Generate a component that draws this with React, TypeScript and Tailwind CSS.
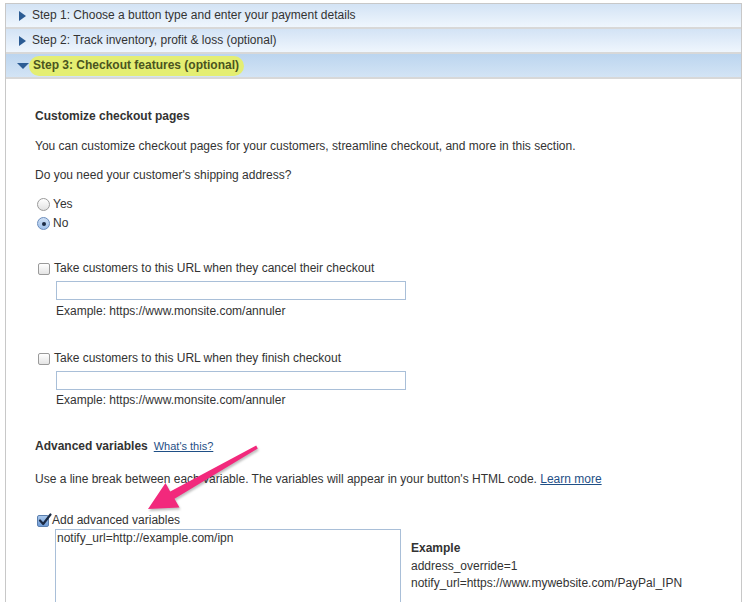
import React from 'react';

const font = "font-['Liberation_Sans',Arial,Helvetica,sans-serif]";

const StepRow: React.FC<{ label: string; open?: boolean }> = ({ label, open }) => (
  <div
    className={`h-[25px] flex items-center border-b-2 border-[#d8d8d8] ${
      open
        ? 'bg-gradient-to-b from-[#bcd5ef] to-[#d3e4f5]'
        : 'bg-gradient-to-b from-[#d3e3f5] to-[#eff6fd]'
    }`}
  >
    {open ? (
      <span className="ml-[11px] w-0 h-0 border-l-[6px] border-r-[6px] border-t-[6px] border-l-transparent border-r-transparent border-t-[#2c5c94]" />
    ) : (
      <span className="ml-[13px] w-0 h-0 border-t-[5px] border-b-[5px] border-l-[7px] border-t-transparent border-b-transparent border-l-[#2c5c94]" />
    )}
    {open ? (
      <span className="pl-[4px] pr-[5px] h-[20px] flex items-center rounded-full bg-[#e4ee72] text-[#4a5520] font-bold text-[12px]">
        {label}
      </span>
    ) : (
      <span className="ml-[6px] text-[#333] text-[12px]">{label}</span>
    )}
  </div>
);

const Checkbox: React.FC<{ checked?: boolean }> = ({ checked }) =>
  checked ? (
    <span className="relative w-[12px] h-[12px] rounded-[2px] border border-[#5b7fae] bg-gradient-to-b from-[#a9c8ec] to-[#6f9bd6] shrink-0">
      <svg viewBox="0 0 14 14" className="absolute -top-[3px] left-[0px] w-[14px] h-[14px]">
        <path d="M2 7.5 L5.2 11 L12.5 1.5" fill="none" stroke="#1b2a44" strokeWidth="2.2" strokeLinecap="round" strokeLinejoin="round" />
      </svg>
    </span>
  ) : (
    <span className="w-[12px] h-[12px] rounded-[2px] border border-[#9a9a9a] bg-gradient-to-b from-[#ffffff] to-[#e4e4e4] shrink-0" />
  );

const Radio: React.FC<{ checked?: boolean }> = ({ checked }) => (
  <span
    className={`w-[13px] h-[13px] rounded-full border flex items-center justify-center shrink-0 ${
      checked
        ? 'border-[#6a8cbc] bg-gradient-to-b from-[#cfe0f5] to-[#9fc0ea]'
        : 'border-[#9a9a9a] bg-gradient-to-b from-[#ffffff] to-[#e2e2e2]'
    }`}
  >
    {checked && <span className="w-[4px] h-[4px] rounded-full bg-[#1c2b44]" />}
  </span>
);

export default function App() {
  return (
    <div className={`${font} text-[12px] leading-[15px] text-[#333] bg-white w-[748px] h-[602px] overflow-hidden relative`}>
      <div className="ml-[5px] mt-[3px] w-[737px] border-l border-r border-t border-[#c8c8c8]">
        <StepRow label="Step 1: Choose a button type and enter your payment details" />
        <StepRow label="Step 2: Track inventory, profit & loss (optional)" />
        <StepRow label="Step 3: Checkout features (optional)" open />

        <div className="pl-[29px] pt-[30px] pb-[40px]">
          <div className="font-bold">Customize checkout pages</div>
          <div className="mt-[15px]">
            You can customize checkout pages for your customers, streamline checkout, and more in this section.
          </div>
          <div className="mt-[14px]">Do you need your customer's shipping address?</div>

          <div className="mt-[12px] flex flex-col">
            <label className="h-[19px] flex items-center gap-[3px] pl-[2px]">
              <Radio />
              <span>Yes</span>
            </label>
            <label className="h-[19px] flex items-center gap-[3px] pl-[2px]">
              <Radio checked />
              <span>No</span>
            </label>
          </div>

          <label className="mt-[28px] flex items-center gap-[4px] pl-[3px]">
            <Checkbox />
            <span>Take customers to this URL when they cancel their checkout</span>
          </label>
          <div className="ml-[21px] mt-[5px] w-[350px] h-[19px] border border-[#a9bfd8] bg-white" />
          <div className="ml-[21px] mt-[4px]">Example: https://www.monsite.com/annuler</div>

          <label className="mt-[32px] flex items-center gap-[4px] pl-[3px]">
            <Checkbox />
            <span>Take customers to this URL when they finish checkout</span>
          </label>
          <div className="ml-[21px] mt-[5px] w-[350px] h-[19px] border border-[#a9bfd8] bg-white" />
          <div className="ml-[21px] mt-[3px]">Example: https://www.monsite.com/annuler</div>

          <div className="mt-[31px] flex items-baseline gap-[6px]">
            <span className="font-bold">Advanced variables</span>
            <a className="text-[11px] text-[#1f4f86] underline">What's this?</a>
          </div>
          <div className="mt-[18px]">
            Use a line break between each variable. The variables will appear in your button's HTML code.{' '}
            <a className="text-[#1f4f86] underline">Learn more</a>
          </div>

          <label className="mt-[26px] flex items-center gap-[3px] pl-[2px]">
            <Checkbox checked />
            <span>Add advanced variables</span>
          </label>

          <div className="flex mt-[1px] ml-[20px]">
            <div className="w-[346px] h-[120px] border border-[#a9bfd8] pl-[1px] pt-[1px]">
              notify_url=http://example.com/ipn
            </div>
            <div className="ml-[10px] pt-[11px] leading-[17.5px]">
              <div className="font-bold">Example</div>
              <div>address_override=1</div>
              <div>notify_url=https://www.mywebsite.com/PayPal_IPN</div>
            </div>
          </div>
        </div>
      </div>

      <svg
        className="absolute left-[140px] top-[440px] w-[125px] h-[75px] drop-shadow-[1px_2px_1px_rgba(0,0,0,0.25)]"
        viewBox="0 0 125 75"
      >
        <polygon
          points="8,69 39.5,67.5 34.5,58.8 117.8,8.6 116.2,5.4 30.2,51.6 25.5,43"
          fill="#f2297c"
        />
      </svg>
    </div>
  );
}
